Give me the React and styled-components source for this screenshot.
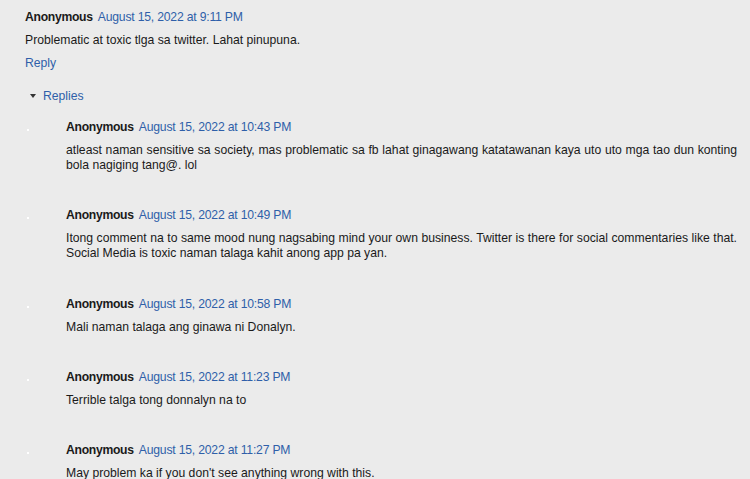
import styled, { createGlobalStyle } from "styled-components";

const GlobalStyle = createGlobalStyle`
  html, body {
    margin: 0;
    padding: 0;
    background: #ebebeb;
  }
  body {
    font-family: "Liberation Sans", Arial, sans-serif;
    font-size: 12.2px;
    color: #1a1a1a;
  }
`;

const Thread = styled.div`
  padding: 10px 13px 0 25px;
`;

const Header = styled.div`
  line-height: 15px;
  height: 15px;
  white-space: nowrap;
`;

const Author = styled.span`
  font-weight: bold;
  letter-spacing: -0.3px;
  margin-right: 5px;
`;

const DateLink = styled.a`
  color: #2f5fa9;
  text-decoration: none;
  letter-spacing: -0.2px;
`;

const Body = styled.p`
  margin: ${(p) => p.$top}px 0 0;
  line-height: 15px;
  text-align: justify;
`;

const ReplyLink = styled.a`
  display: block;
  margin-top: 8px;
  line-height: 15px;
  color: #2f5fa9;
  text-decoration: none;
`;

const Toggle = styled.div`
  display: flex;
  align-items: center;
  gap: 7px;
  margin: 18px 0 0 5px;
  line-height: 15px;
  color: #2f5fa9;
`;

const Caret = styled.span`
  width: 0;
  height: 0;
  border-left: 3px solid transparent;
  border-right: 3px solid transparent;
  border-top: 4px solid #333;
  margin-top: -2px;
`;

const ReplyList = styled.div`
  margin-top: 16px;
  display: flex;
  flex-direction: column;
  gap: 35.3px;
`;

const ReplyRow = styled.div`
  display: grid;
  grid-template-columns: 41px 1fr;
`;

const Avatar = styled.div`
  padding: 9px 0 0 2px;
`;

const Dot = styled.span`
  display: block;
  width: 2px;
  height: 2px;
  background: #fff;
`;

const replies = [
  {
    date: "August 15, 2022 at 10:43 PM",
    text: "atleast naman sensitive sa society, mas problematic sa fb lahat ginagawang katatawanan kaya uto uto mga tao dun konting bola nagiging tang@. lol",
  },
  {
    date: "August 15, 2022 at 10:49 PM",
    text: "Itong comment na to same mood nung nagsabing mind your own business. Twitter is there for social commentaries like that. Social Media is toxic naman talaga kahit anong app pa yan.",
  },
  {
    date: "August 15, 2022 at 10:58 PM",
    text: "Mali naman talaga ang ginawa ni Donalyn.",
  },
  {
    date: "August 15, 2022 at 11:23 PM",
    text: "Terrible talga tong donnalyn na to",
  },
  {
    date: "August 15, 2022 at 11:27 PM",
    text: "May problem ka if you don't see anything wrong with this.",
  },
];

export default function App() {
  return (
    <>
      <GlobalStyle />
      <Thread>
        <Header>
          <Author>Anonymous</Author>
          <DateLink href="#">August 15, 2022 at 9:11 PM</DateLink>
        </Header>
        <Body $top={8}>Problematic at toxic tlga sa twitter. Lahat pinupuna.</Body>
        <ReplyLink href="#">Reply</ReplyLink>
        <Toggle>
          <Caret />
          <span>Replies</span>
        </Toggle>
        <ReplyList>
          {replies.map((r) => (
            <ReplyRow key={r.date}>
              <Avatar>
                <Dot />
              </Avatar>
              <div>
                <Header>
                  <Author>Anonymous</Author>
                  <DateLink href="#">{r.date}</DateLink>
                </Header>
                <Body $top={8}>{r.text}</Body>
              </div>
            </ReplyRow>
          ))}
        </ReplyList>
      </Thread>
    </>
  );
}
